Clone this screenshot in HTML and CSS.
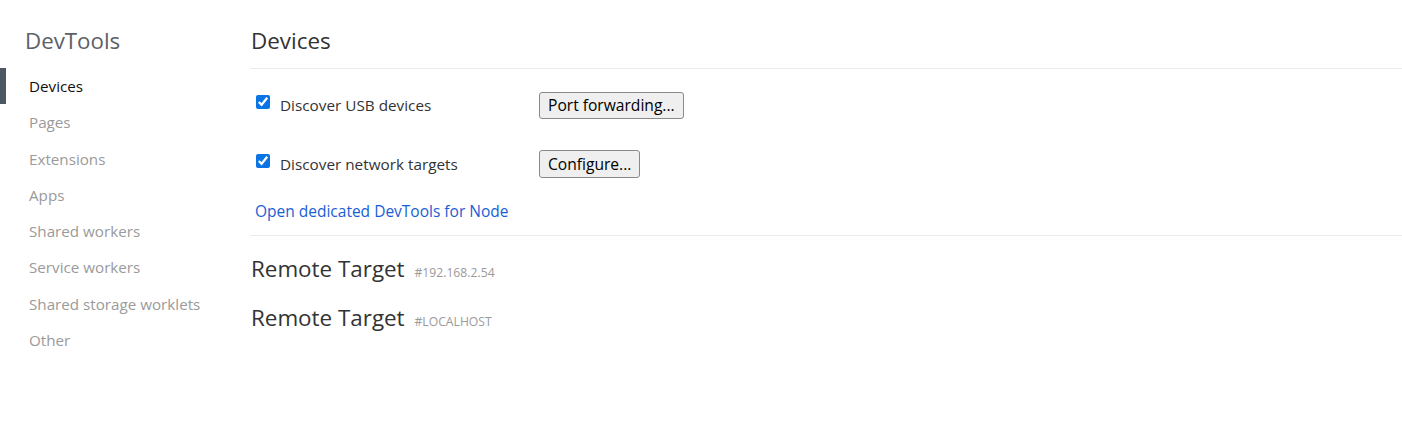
FILE: index.html
```html
<!DOCTYPE html>
<html>
<head>
<meta charset="utf-8">
<title>Inspect with Chrome Developer Tools</title>
<link rel="stylesheet" href="styles.css">
</head>
<body>
<div class="page">
  <aside class="sidebar">
    <h1 class="sidebar-title">DevTools</h1>
    <ul class="nav">
      <li class="nav-item selected">Devices</li>
      <li class="nav-item">Pages</li>
      <li class="nav-item">Extensions</li>
      <li class="nav-item">Apps</li>
      <li class="nav-item">Shared workers</li>
      <li class="nav-item">Service workers</li>
      <li class="nav-item">Shared storage worklets</li>
      <li class="nav-item">Other</li>
    </ul>
  </aside>
  <main class="content">
    <h2 class="content-header">Devices</h2>
    <section class="device-settings">
      <div class="setting-row">
        <label class="setting-label">
          <input type="checkbox" class="checkbox" checked>
          <span>Discover USB devices</span>
        </label>
        <button class="btn">Port forwarding...</button>
      </div>
      <div class="setting-row row-gap">
        <label class="setting-label">
          <input type="checkbox" class="checkbox" checked>
          <span>Discover network targets</span>
        </label>
        <button class="btn btn-tall">Configure...</button>
      </div>
      <div class="node-link-row">
        <a class="node-link" href="#">Open dedicated DevTools for Node</a>
      </div>
    </section>
    <section class="targets">
      <div class="target-title">Remote Target <span class="target-id">#192.168.2.54</span></div>
      <div class="target-title second">Remote Target <span class="target-id">#LOCALHOST</span></div>
    </section>
  </main>
</div>
</body>
</html>
```
FILE: styles.css
```css
html, body {
  margin: 0;
  padding: 0;
  background: #ffffff;
}
body {
  font-family: "Open Sans", "Noto Sans", sans-serif;
  color: #333333;
}
.page {
  display: flex;
  align-items: flex-start;
}
.sidebar {
  width: 250px;
  flex: none;
}
.sidebar-title {
  margin: 0;
  padding: 26px 0 12px 25px;
  height: 30px;
  line-height: 30px;
  font-size: 22.3px;
  font-weight: 400;
  color: #5c6166;
}
.nav {
  list-style: none;
  margin: 0;
  padding: 0;
}
.nav-item {
  height: 36.3px;
  line-height: 36.3px;
  padding-left: 23px;
  border-left: 6px solid transparent;
  font-size: 15.2px;
  color: #9a9a9a;
  white-space: nowrap;
}
.nav-item.selected {
  border-left-color: #4e5764;
  color: #111111;
}
.content {
  flex: 1;
  min-width: 0;
}
.content-header {
  margin: 0;
  padding: 26px 0 12px 1px;
  height: 30px;
  line-height: 30px;
  font-size: 22.4px;
  font-weight: 400;
  color: #333333;
  border-bottom: 1px solid #ebebeb;
}
.device-settings {
  padding: 16px 0 12px 0;
  border-bottom: 1px solid #ebebeb;
}
.setting-row {
  display: flex;
  align-items: center;
  height: 40px;
}
.row-gap {
  margin-top: 19px;
}
.setting-label {
  display: flex;
  align-items: center;
  width: 289px;
  flex: none;
  font-size: 15.3px;
  color: #333333;
}
.checkbox {
  width: 14px;
  height: 14px;
  margin: 0 10px 0 6px;
  accent-color: #0b74e5;
  position: relative;
  top: -3px;
}
.btn {
  height: 27px;
  padding: 0 8px;
  border: 1px solid #8a8a8a;
  border-radius: 3px;
  background: #efefef;
  color: #000000;
  font-family: "Open Sans", "Noto Sans", sans-serif;
  font-size: 15.6px;
  line-height: 25px;
}
.btn-tall {
  height: 28px;
}
.node-link-row {
  margin-top: 15px;
  height: 24px;
  line-height: 24px;
  padding-left: 5px;
}
.node-link {
  font-size: 15.5px;
  color: #1a5ed4;
  text-decoration: none;
}
.targets {
  padding-top: 18px;
  padding-left: 1px;
}
.target-title {
  height: 30px;
  line-height: 30px;
  font-size: 22.4px;
  color: #333333;
}
.target-title.second {
  margin-top: 19px;
}
.target-id {
  margin-left: 4px;
  font-size: 12.2px;
  color: #9a9a9a;
}
```
